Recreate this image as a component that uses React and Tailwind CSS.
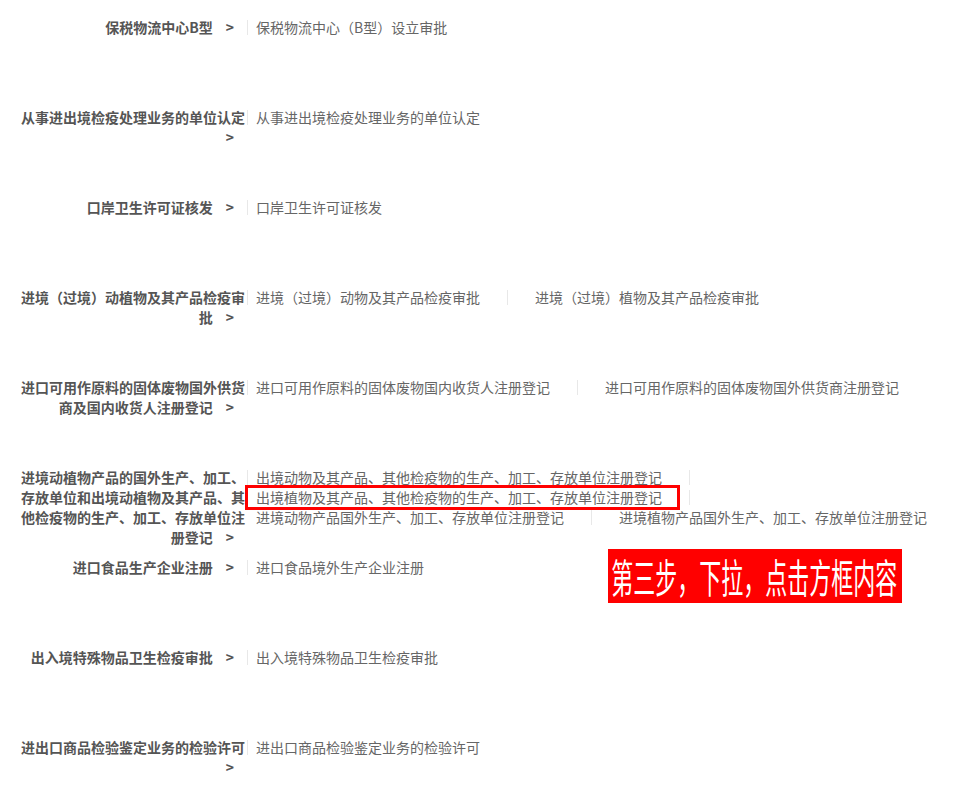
import React from 'react';

const rows = [
  { label: '保税物流中心B型', items: ['保税物流中心（B型）设立审批'] },
  { label: '从事进出境检疫处理业务的单位认定', items: ['从事进出境检疫处理业务的单位认定'] },
  { label: '口岸卫生许可证核发', items: ['口岸卫生许可证核发'] },
  {
    label: '进境（过境）动植物及其产品检疫审批',
    items: ['进境（过境）动物及其产品检疫审批', '进境（过境）植物及其产品检疫审批'],
  },
  {
    label: '进口可用作原料的固体废物国外供货商及国内收货人注册登记',
    items: ['进口可用作原料的固体废物国内收货人注册登记', '进口可用作原料的固体废物国外供货商注册登记'],
  },
  {
    label: '进境动植物产品的国外生产、加工、存放单位和出境动植物及其产品、其他检疫物的生产、加工、存放单位注册登记',
    items: [
      '出境动物及其产品、其他检疫物的生产、加工、存放单位注册登记',
      '出境植物及其产品、其他检疫物的生产、加工、存放单位注册登记',
      '进境动物产品国外生产、加工、存放单位注册登记',
      '进境植物产品国外生产、加工、存放单位注册登记',
    ],
  },
  { label: '进口食品生产企业注册', items: ['进口食品境外生产企业注册'] },
  { label: '出入境特殊物品卫生检疫审批', items: ['出入境特殊物品卫生检疫审批'] },
  { label: '进出口商品检验鉴定业务的检验许可', items: ['进出口商品检验鉴定业务的检验许可'] },
];

const App = () => {
  return (
    <div className="relative min-h-[789px] bg-white pt-[17px] font-['Noto_Sans_CJK_SC',sans-serif] text-[14px] leading-5">
      {rows.map((row) => (
        <div key={row.label} className="flex h-[90px]">
          <div className="ml-[21px] w-[226px] shrink-0 pr-[2px] text-right font-bold text-[#555]">
            {row.label}
            <span className="ml-[13px] mr-[11px] inline-block">&gt;</span>
          </div>
          <div className="flex min-w-0 flex-1 items-start">
            <div className="mt-[3px] h-[15px] w-px shrink-0 bg-[#e8e8e8]" />
            <div className="flex flex-wrap pl-[8px] text-[#666]">
              {row.items.map((item, i) => (
                <div key={item} className="flex items-center">
                  <a href="#" className="whitespace-nowrap">{item}</a>
                  {i < row.items.length - 1 && <div className="mx-[27px] h-[15px] w-px bg-[#e8e8e8]" />}
                </div>
              ))}
            </div>
          </div>
        </div>
      ))}

      {/* 标注：红框 + 提示 */}
      <div className="absolute left-[245px] top-[485px] h-[25px] w-[435px] border-[3px] border-[#ff0000]" />
      <div className="absolute left-[608px] top-[549px] h-[54px] w-[294px] overflow-hidden bg-[#ff0000]">
        <span className="inline-block origin-left scale-x-[0.55] whitespace-nowrap pl-[6px] text-[40px] leading-[54px] text-white">
          第三步，下拉，点击方框内容
        </span>
      </div>
    </div>
  );
};

export default App;
